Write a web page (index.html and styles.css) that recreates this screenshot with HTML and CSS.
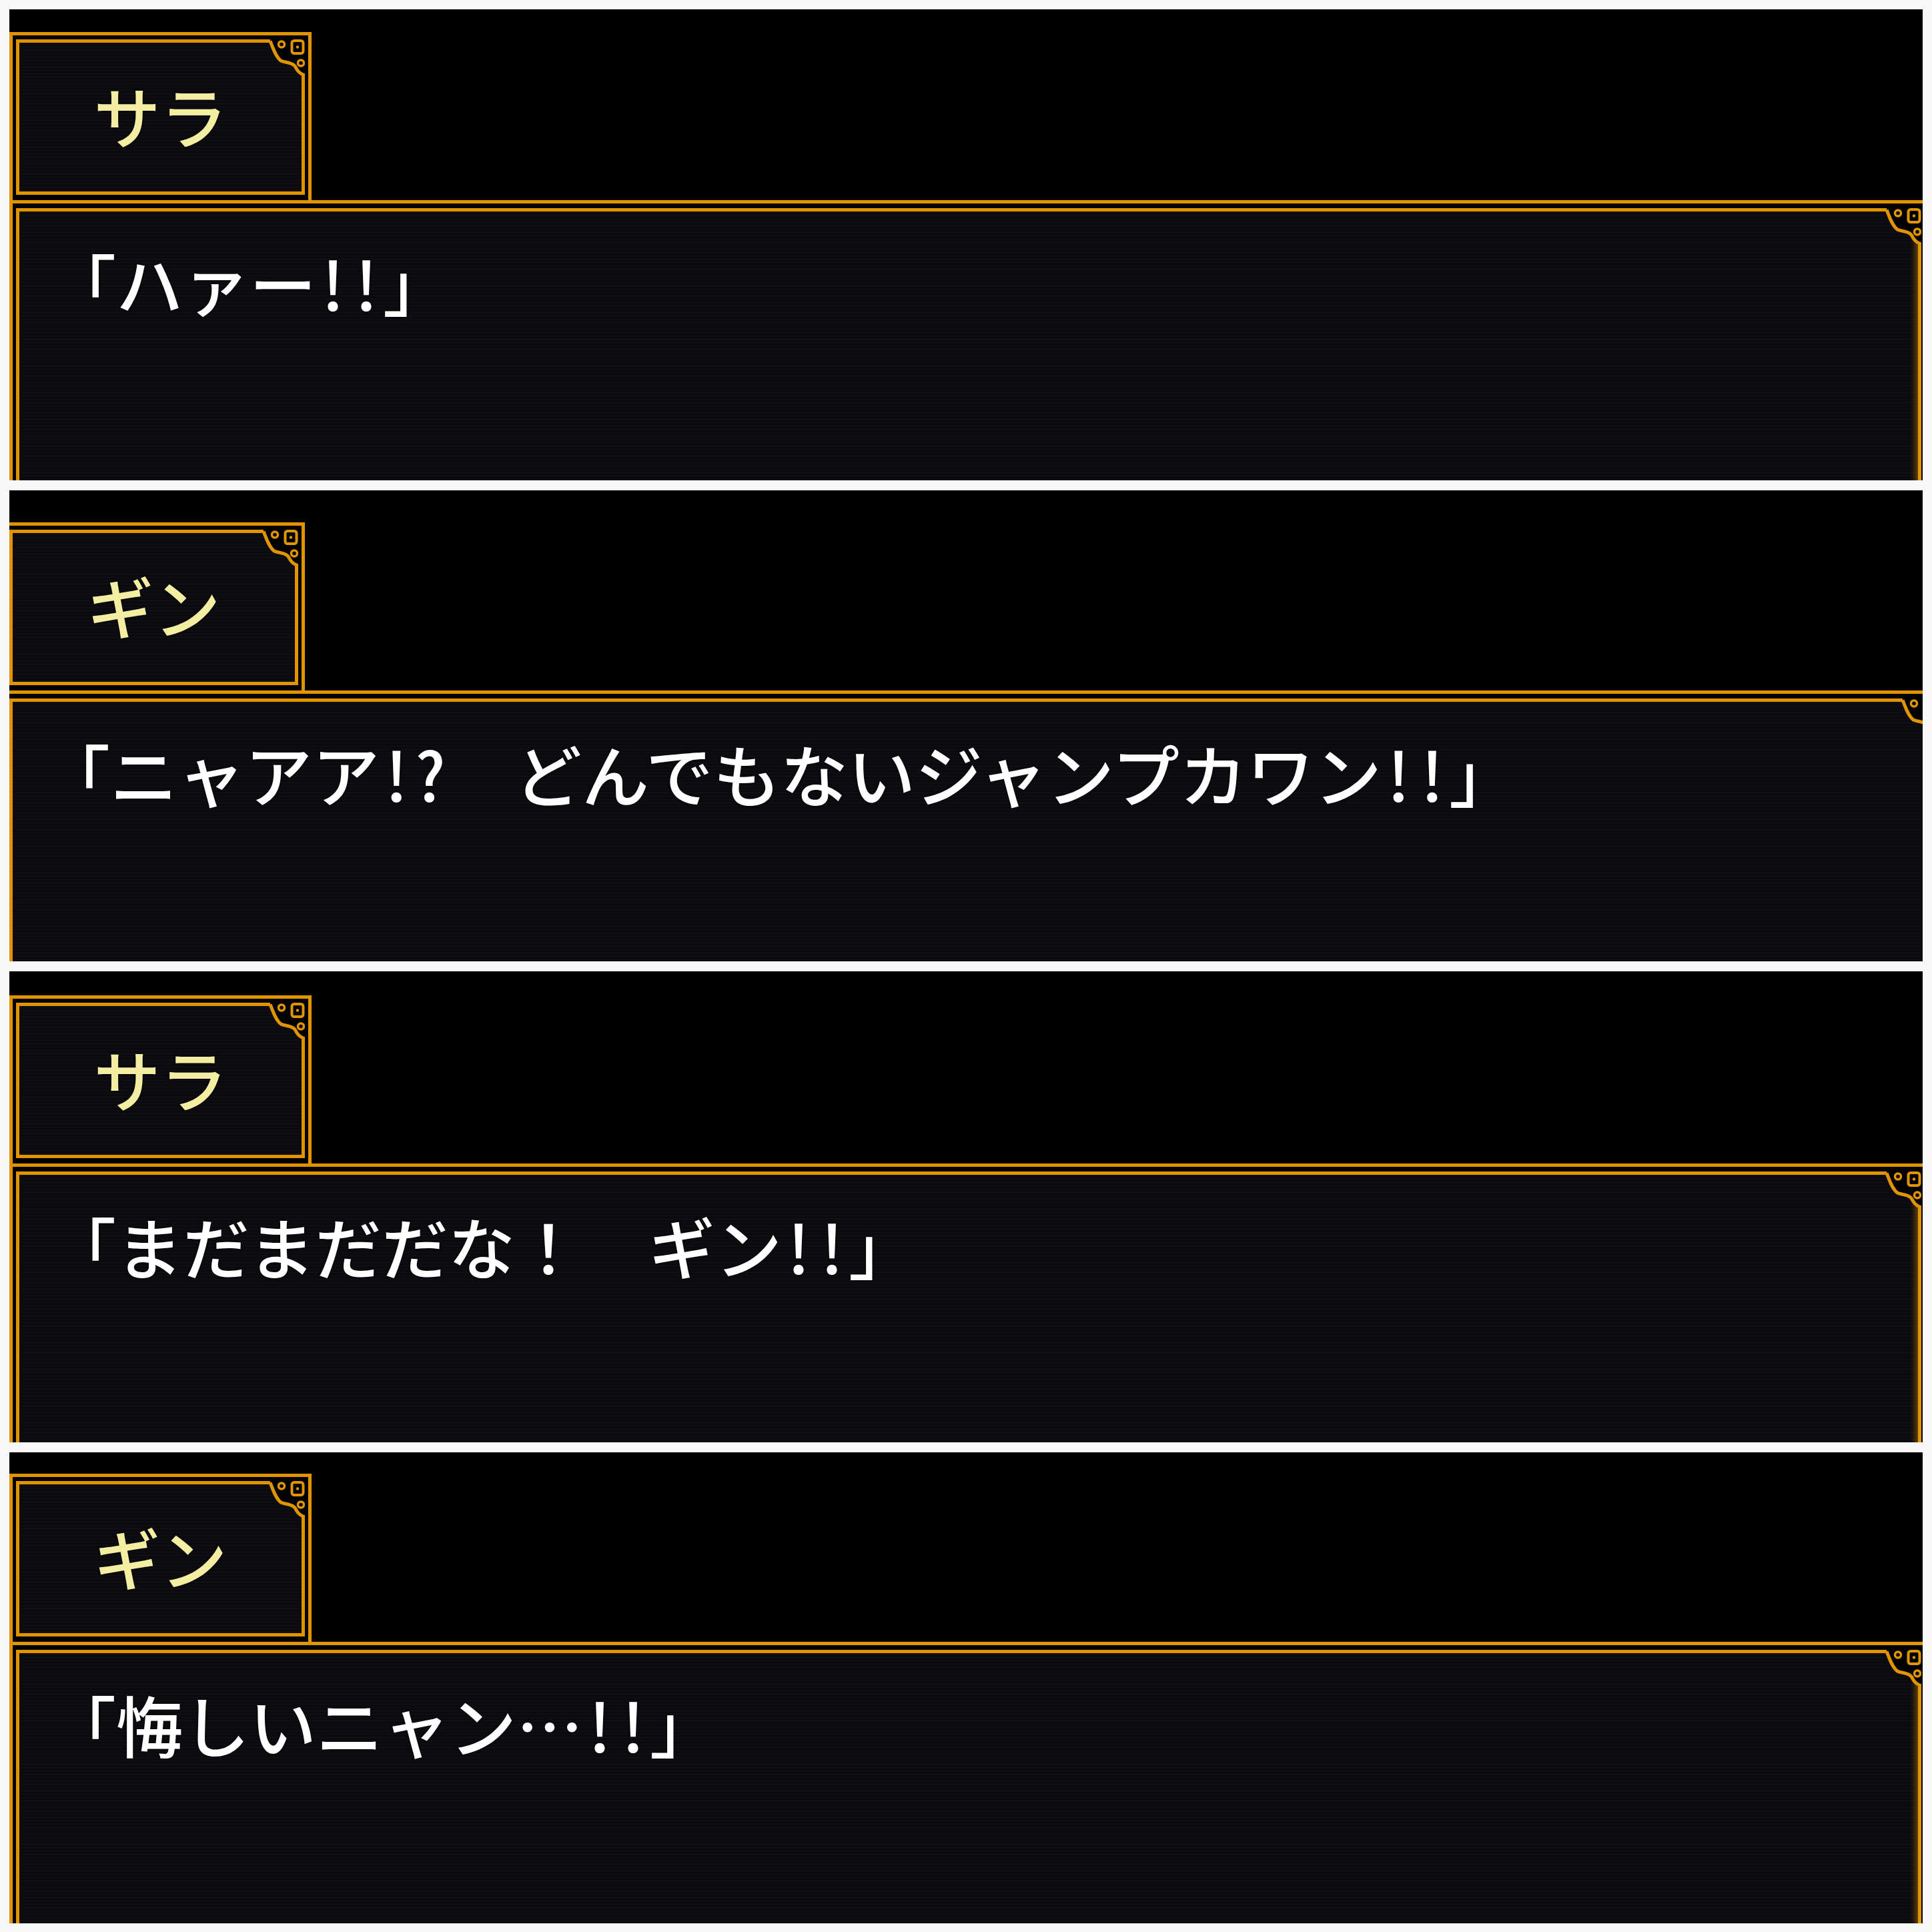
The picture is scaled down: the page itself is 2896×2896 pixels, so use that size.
FILE: index.html
```html
<!DOCTYPE html>
<html lang="ja">
<head>
  <meta charset="UTF-8">
  <title>会話ログ</title>
  <link rel="stylesheet" href="styles.css">
</head>
<body>
<svg class="defs" aria-hidden="true">
  <symbol id="corner" viewBox="0 0 60 60">
    <path d="M8 0 H60 V53 L57.5 53 C50 50 48 45 45 40 C40 34 30 35 24 32 C16 26 12 12 8 2.5 Z" fill="#000"/>
    <path d="M8 2.5 C12 12 16 26 24 32 C30 35 40 34 45 40 C48 45 50 50 57.5 53 V60" fill="none" stroke="#e09400" stroke-width="5"/>
    <circle cx="25" cy="7.5" r="4.5" fill="none" stroke="#e09400" stroke-width="3.5"/>
    <rect x="40.5" y="2" width="17" height="19" rx="3.5" fill="none" stroke="#e09400" stroke-width="4"/>
    <circle cx="49" cy="11.5" r="2.2" fill="#e09400"/>
    <circle cx="54" cy="35.5" r="4.5" fill="none" stroke="#e09400" stroke-width="3.5"/>
  </symbol>
</svg>

<div class="log">

  <section class="scene s1">
    <div class="window">
      <div class="name-frame">
        <div class="box name-box">
          <span class="name">サラ</span>
          <svg class="corner"><use href="#corner" width="60" height="60"/></svg>
        </div>
      </div>
      <div class="msg-frame">
        <div class="box msg-box">
          <p class="line">「ハァー<span class="hw">!!</span>」</p>
          <svg class="corner"><use href="#corner" width="60" height="60"/></svg>
        </div>
      </div>
    </div>
  </section>

  <section class="scene s2">
    <div class="window">
      <div class="name-frame">
        <div class="box name-box">
          <span class="name">ギン</span>
          <svg class="corner"><use href="#corner" width="60" height="60"/></svg>
        </div>
      </div>
      <div class="msg-frame">
        <div class="box msg-box">
          <p class="line">「ニャアア<span class="hw">!?</span>　どんでもないジャンプカワン<span class="hw">!!</span>」</p>
          <svg class="corner"><use href="#corner" width="60" height="60"/></svg>
        </div>
      </div>
    </div>
  </section>

  <section class="scene s3">
    <div class="window">
      <div class="name-frame">
        <div class="box name-box">
          <span class="name">サラ</span>
          <svg class="corner"><use href="#corner" width="60" height="60"/></svg>
        </div>
      </div>
      <div class="msg-frame">
        <div class="box msg-box">
          <p class="line">「まだまだだな！　ギン<span class="hw">!!</span>」</p>
          <svg class="corner"><use href="#corner" width="60" height="60"/></svg>
        </div>
      </div>
    </div>
  </section>

  <section class="scene s4">
    <div class="window">
      <div class="name-frame">
        <div class="box name-box">
          <span class="name">ギン</span>
          <svg class="corner"><use href="#corner" width="60" height="60"/></svg>
        </div>
      </div>
      <div class="msg-frame">
        <div class="box msg-box">
          <p class="line">「悔しいニャン…<span class="hw">!!</span>」</p>
          <svg class="corner"><use href="#corner" width="60" height="60"/></svg>
        </div>
      </div>
    </div>
  </section>

</div>
</body>
</html>
```

FILE: styles.css
```css
body {
  margin: 0;
  padding: 14px;
  background: #f8f8f8;
  font-family: "Noto Sans CJK JP", "Noto Sans", sans-serif;
}

.defs {
  position: absolute;
  width: 0;
  height: 0;
}

.log {
  display: flex;
  flex-direction: column;
  gap: 15px;
}

.scene {
  height: 706px;
  background: #000;
  overflow: hidden;
}

/* each shot is cropped a little differently */
.window {
  width: max-content;
  padding-top: 34px;
}
.s2 .window {
  padding-top: 48px;
  margin-left: -10px;
}
.s3 .window {
  padding-top: 36px;
}
.s4 .window {
  padding-top: 32px;
}

.name-frame {
  width: max-content;
  border: 5px solid #e09400;
  border-bottom: 0;
  padding: 6px 5px 8px;
}

.box {
  position: relative;
  box-sizing: border-box;
  border: 5px solid #e09400;
  background: repeating-linear-gradient(to bottom, #0e0d11 0 3px, #0a090d 3px 5px);
}

.name-box {
  width: 433px;
  height: 233px;
  padding-bottom: 8px;
  display: flex;
  align-items: center;
  justify-content: center;
}

.name {
  font-size: 100px;
  font-weight: 500;
  line-height: 1;
  color: #f4eea2;
  text-shadow: 0 0 3px #000;
}

.msg-frame {
  border: 5px solid #e09400;
  padding: 7px 5px 0;
}

.msg-box {
  width: 2856px;
  height: 480px;
  padding: 56px 45px 0;
  box-shadow: inset -10px 0 8px -6px rgba(224, 148, 0, 0.45);
}
.s2 .msg-box {
  width: 2890px;
}

.line {
  margin: 0;
  font-size: 100px;
  font-weight: 500;
  line-height: 1;
  color: #fff;
  white-space: nowrap;
  text-shadow: 0 0 3px #000;
}
.s2 .line {
  font-size: 101px;
}

/* game font draws ascii half-width */
.hw {
  font-feature-settings: "hwid" 1;
}

.corner {
  position: absolute;
  top: -5px;
  right: -5px;
  width: 60px;
  height: 60px;
}
```
